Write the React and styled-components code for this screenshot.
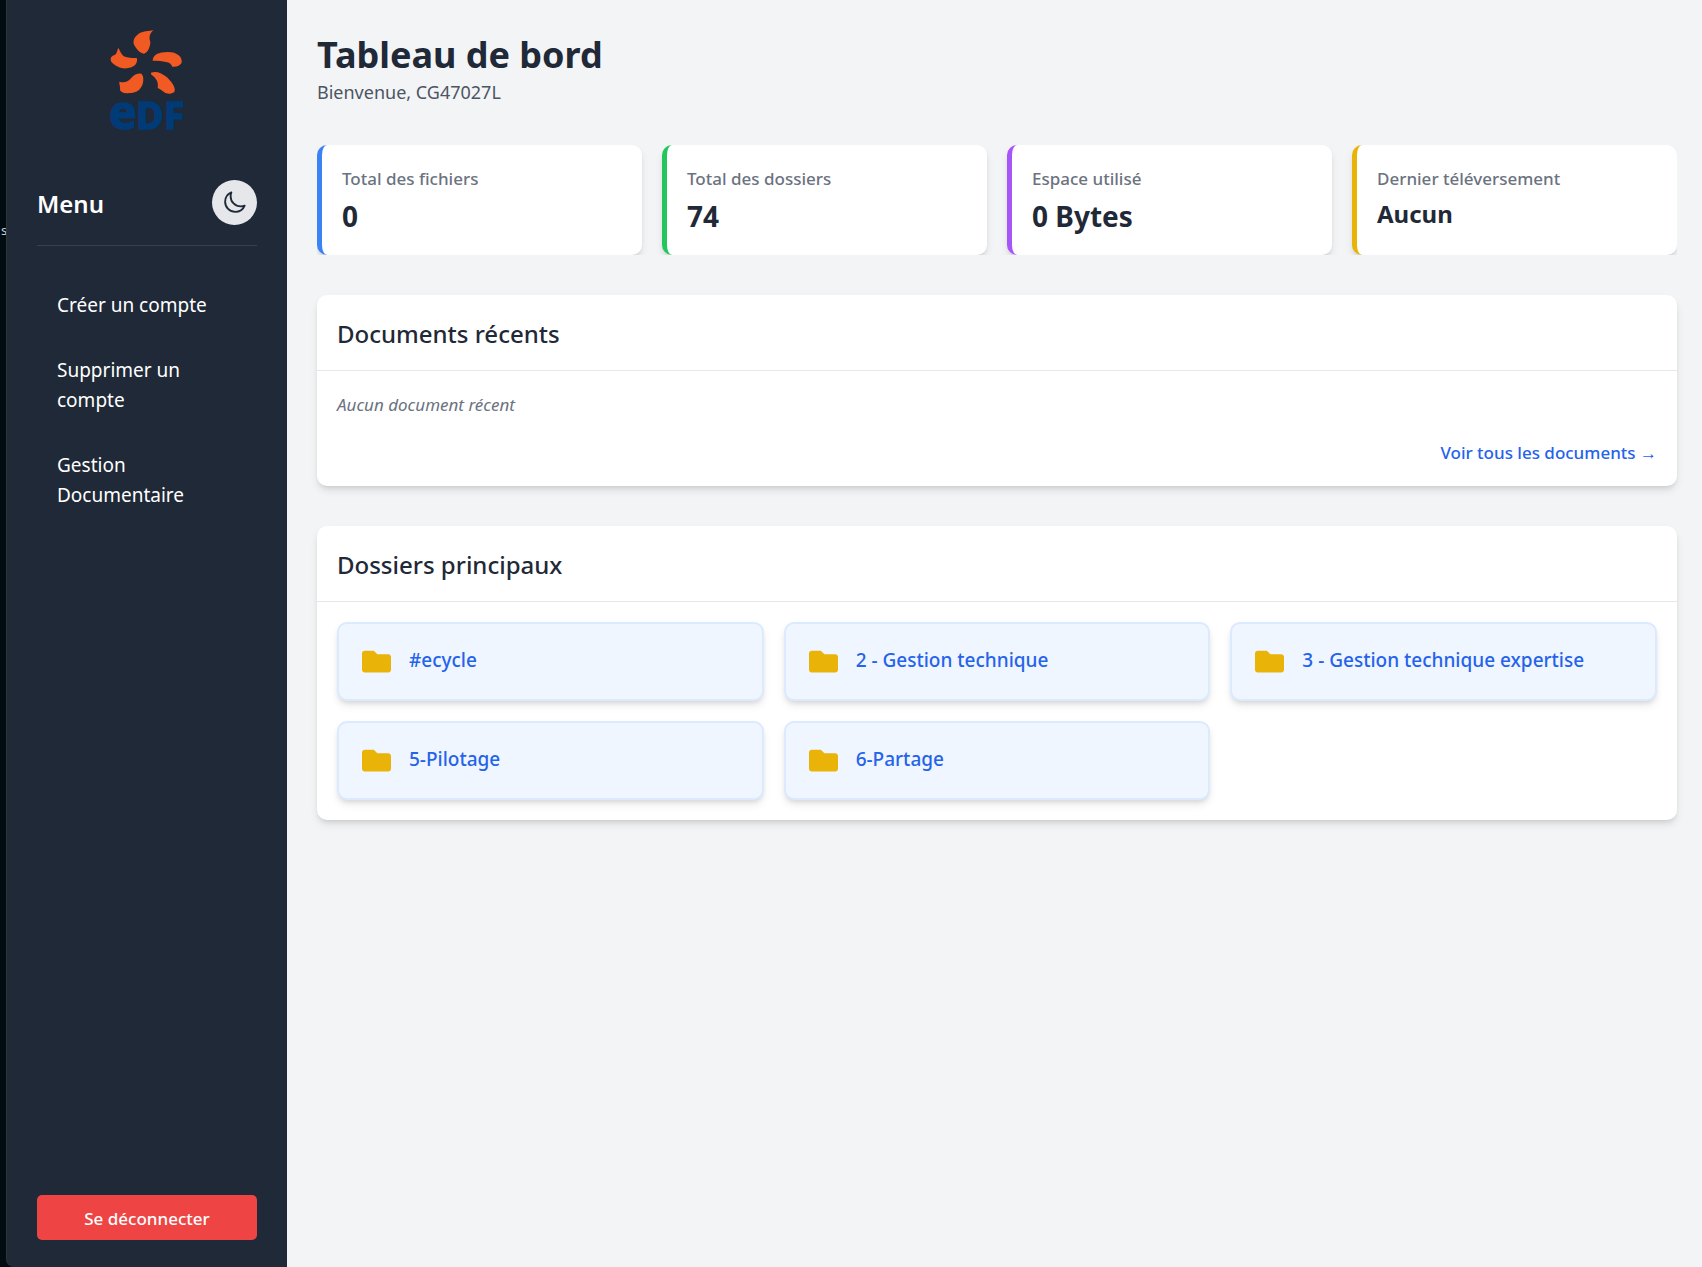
import React, { useState } from "react";
import styled, { createGlobalStyle } from "styled-components";
import { FaFolder } from "react-icons/fa";

const GlobalStyle = createGlobalStyle`
  *, *::before, *::after { box-sizing: border-box; }
  body {
    margin: 0;
    background: #f3f4f6;
    color: #1f2937;
    font-family: "Segoe UI", "Noto Sans", "Open Sans", sans-serif;
    font-size: 19px;
    line-height: 30px;
  }
  h1, h2, p, ul { margin: 0; padding: 0; }
  ul { list-style: none; }
  button { font-family: inherit; cursor: pointer; }
  a { text-decoration: none; }
`;

const Layout = styled.div`
  display: flex;
  min-height: 100vh;
`;

const Side = styled.div`
  display: flex;
  flex: none;
  background: #010b12;
`;

const Edge = styled.div`
  width: 6px;
  padding: 215px 0 0 1px;
  overflow: hidden;
  color: #c9cdd2;
  font-size: 13px;
`;

const Sidebar = styled.aside`
  display: flex;
  flex-direction: column;
  width: 281px;
  padding: 30px 30px 27px;
  background: #1f2937;
  border-left: 1px solid #2f3538;
  border-bottom-left-radius: 8px;
  color: #fff;
`;

const Logo = styled.svg`
  display: block;
  align-self: center;
  width: 75px;
  height: 101px;
  margin-bottom: 49px;
  overflow: visible;
`;

const MenuHeader = styled.div`
  display: flex;
  align-items: center;
  justify-content: space-between;
  padding-bottom: 20px;
  border-bottom: 1px solid #374151;
`;

const MenuTitle = styled.h2`
  padding-top: 2px;
  font-size: 24px;
  font-weight: 600;
  line-height: 32px;
`;

const ThemeButton = styled.button`
  display: grid;
  place-items: center;
  width: 45px;
  height: 45px;
  padding: 0;
  border: 0;
  border-radius: 50%;
  background: #e5e7eb;
  color: #1f2937;
`;

const Nav = styled.nav`
  margin-top: 29px;

  ul {
    display: flex;
    flex-direction: column;
    gap: 5px;
  }
`;

const NavLink = styled.a`
  display: block;
  padding: 15px 20px;
  color: #fff;
`;

const LogoutButton = styled.button`
  height: 45px;
  margin-top: auto;
  padding: 2px 0 0;
  border: 0;
  border-radius: 5px;
  background: #ef4444;
  color: #fff;
  font-size: 17px;
  font-weight: 500;
`;

const Main = styled.main`
  display: flex;
  flex: 1;
  flex-direction: column;
  gap: 40px;
  min-width: 0;
  padding: 30px 25px 30px 30px;
`;

const Title = styled.h1`
  font-size: 36px;
  font-weight: 700;
  line-height: 50px;
`;

const Subtitle = styled.p`
  color: #4b5563;
  font-size: 18px;
  line-height: 25px;
`;

const StatGrid = styled.section`
  display: grid;
  grid-template-columns: repeat(4, 1fr);
  gap: 20px;
  overflow: hidden;
`;

const shadow = "0 5px 8px -1px rgba(0, 0, 0, 0.1), 0 3px 5px -2px rgba(0, 0, 0, 0.1)";

const StatCard = styled.div`
  padding: 20px;
  background: #fff;
  border-left: 5px solid ${(p) => p.$accent};
  border-radius: 10px;
  box-shadow: ${shadow};
`;

const StatLabel = styled.p`
  color: #6b7280;
  font-size: 17px;
  font-weight: 500;
  line-height: 27px;
`;

const StatValue = styled.p`
  margin-top: 5px;
  font-size: ${(p) => (p.$small ? 24 : 28)}px;
  font-weight: 700;
  line-height: ${(p) => (p.$small ? 34 : 38)}px;
`;

const Panel = styled.section`
  background: #fff;
  border-radius: 10px;
  box-shadow: ${shadow};
`;

const PanelTitle = styled.h2`
  padding: 20px 20px 18px;
  border-bottom: 1px solid #e5e7eb;
  font-size: 24px;
  font-weight: 500;
  line-height: 37px;
`;

const PanelBody = styled.div`
  display: flex;
  flex-direction: column;
  gap: 21px;
  padding: 20px;
  font-size: 17px;
  line-height: 27px;
`;

const EmptyText = styled.p`
  color: #6b7280;
  font-style: italic;
`;

const MoreLink = styled.a`
  align-self: flex-end;
  color: #2563eb;
  font-weight: 500;
`;

const FolderGrid = styled.div`
  display: grid;
  grid-template-columns: repeat(3, 1fr);
  gap: 20px;
  padding: 20px;
`;

const FolderCard = styled.a`
  display: flex;
  gap: 15px;
  padding: 20px;
  background: #eff6ff;
  border: 2px solid #dbeafe;
  border-radius: 10px;
  box-shadow: ${shadow};
  color: #2563eb;
  font-weight: 500;
  line-height: 32px;
`;

const FolderIcon = styled(FaFolder)`
  flex: none;
  width: 35px;
  height: 35px;
  padding: 3px;
  color: #eab308;
`;

const navItems = ["Créer un compte", "Supprimer un compte", "Gestion Documentaire"];

const stats = [
  { label: "Total des fichiers", value: "0", accent: "#3b82f6" },
  { label: "Total des dossiers", value: "74", accent: "#22c55e" },
  { label: "Espace utilisé", value: "0 Bytes", accent: "#a855f7" },
  { label: "Dernier téléversement", value: "Aucun", accent: "#eab308", small: true },
];

const folders = [
  "#ecycle",
  "2 - Gestion technique",
  "3 - Gestion technique expertise",
  "5-Pilotage",
  "6-Partage",
];

function EdfLogo() {
  return (
    <Logo viewBox="59 45 225 303" role="img" aria-label="eDF">
      <g fill="#f15a22">
        <path d="M190 45C175 49 156 48 145 56C130 67 127 80 132 91C139 104 150 115 160 116C172 114 180 95 180 80C174 66 180 52 190 45Z" />
        <path d="M187 137C188 119 205 111 232 111C262 111 276 126 274 143C268 152 259 157 246 155C241 139 220 138 187 137Z" />
        <path d="M84 99C79 108 81 117 71 121C60 125 59 134 64 142C75 155 95 162 110 160C130 158 143 147 140 130C130 127 125 131 110 127C93 123 92 112 84 99Z" />
        <path d="M87 200C99 204 112 203 122 190C131 179 142 175 153 176C161 182 160 200 156 210C148 228 135 234 118 234C100 236 92 232 89 225C91 214 86 209 87 200Z" />
        <path d="M182 173C196 167 215 173 230 187C248 205 257 220 252 231C242 238 230 238 222 232C215 226 208 221 202 219C205 204 200 191 182 178Z" />
      </g>
      <g
        fill="#003b78"
        stroke="#003b78"
        strokeWidth="5"
        fontFamily='"Open Sans", "Noto Sans", sans-serif'
        fontWeight="700"
      >
        <text x="57" y="343" fontSize="140">e</text>
        <text x="138" y="341" fontSize="110">D</text>
        <text x="222" y="341" fontSize="110">F</text>
      </g>
    </Logo>
  );
}

function MoonIcon() {
  return (
    <svg width="25" height="25" viewBox="0 0 24 24" fill="none" stroke="currentColor" strokeWidth="1.8" strokeLinecap="round" strokeLinejoin="round" aria-hidden="true">
      <path d="M21.752 15.002A9.72 9.72 0 0 1 18 15.75c-5.385 0-9.75-4.365-9.75-9.75 0-1.33.266-2.597.748-3.752A9.753 9.753 0 0 0 3 11.25C3 16.635 7.365 21 12.75 21a9.753 9.753 0 0 0 9.002-5.998Z" />
    </svg>
  );
}

export default function App() {
  const [dark, setDark] = useState(false);

  return (
    <>
      <GlobalStyle />
      <Layout>
        <Side>
          <Edge>s</Edge>
          <Sidebar>
            <EdfLogo />
            <MenuHeader>
              <MenuTitle>Menu</MenuTitle>
              <ThemeButton
                type="button"
                aria-label="Mode sombre"
                aria-pressed={dark}
                onClick={() => setDark(!dark)}
              >
                <MoonIcon />
              </ThemeButton>
            </MenuHeader>
            <Nav>
              <ul>
                {navItems.map((item) => (
                  <li key={item}>
                    <NavLink href="#">{item}</NavLink>
                  </li>
                ))}
              </ul>
            </Nav>
            <LogoutButton type="button">Se déconnecter</LogoutButton>
          </Sidebar>
        </Side>
        <Main>
          <header>
            <Title>Tableau de bord</Title>
            <Subtitle>Bienvenue, CG47027L</Subtitle>
          </header>
          <StatGrid>
            {stats.map((s) => (
              <StatCard key={s.label} $accent={s.accent}>
                <StatLabel>{s.label}</StatLabel>
                <StatValue $small={s.small}>{s.value}</StatValue>
              </StatCard>
            ))}
          </StatGrid>
          <Panel>
            <PanelTitle>Documents récents</PanelTitle>
            <PanelBody>
              <EmptyText>Aucun document récent</EmptyText>
              <MoreLink href="#">Voir tous les documents →</MoreLink>
            </PanelBody>
          </Panel>
          <Panel>
            <PanelTitle>Dossiers principaux</PanelTitle>
            <FolderGrid>
              {folders.map((name) => (
                <FolderCard key={name} href="#">
                  <FolderIcon aria-hidden="true" />
                  <span>{name}</span>
                </FolderCard>
              ))}
            </FolderGrid>
          </Panel>
        </Main>
      </Layout>
    </>
  );
}
